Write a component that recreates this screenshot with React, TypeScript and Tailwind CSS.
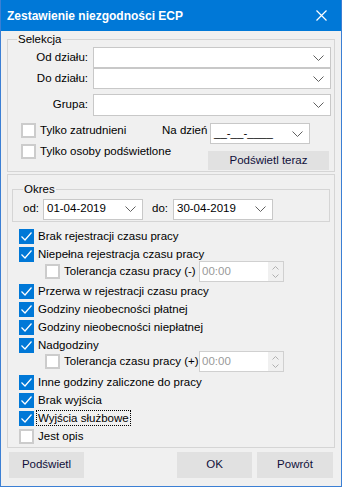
import React from "react";

const font = { fontFamily: '"Liberation Sans", Arial, sans-serif' };

function Chevron({ className = "" }: { className?: string }) {
  return (
    <svg width="11" height="6" viewBox="0 0 11 6" className={className}>
      <path d="M0.5 0.5 L5.5 5.5 L10.5 0.5" fill="none" stroke="#606060" strokeWidth="1" />
    </svg>
  );
}

function Check({ checked }: { checked: boolean }) {
  if (checked) {
    return (
      <div className="w-[15px] h-[15px] bg-[#0078d7] flex items-center justify-center shrink-0">
        <svg width="13" height="13" viewBox="0 0 13 13">
          <path d="M1.5 6.5 L5 10 L11.5 2.5" fill="none" stroke="#ffffff" strokeWidth="1.2" />
        </svg>
      </div>
    );
  }
  return <div className="w-[15px] h-[15px] bg-white border-2 border-[#cccccc] shrink-0" />;
}

function Combo({ className = "", text = "" }: { className?: string; text?: string }) {
  return (
    <div className={`bg-white border border-[#c8c8c8] flex items-center justify-between pl-[3px] pr-[6px] ${className}`}>
      <span className="text-black">{text}</span>
      <Chevron />
    </div>
  );
}

function Row({ checked, label, focus }: { checked: boolean; label: string; focus?: boolean }) {
  return (
    <div className="h-[18px] flex items-start pl-[11px]">
      <Check checked={checked} />
      <span
        className={`ml-[3px] leading-[14px] px-[1px] ${focus ? "outline outline-1 outline-dotted outline-black" : ""}`}
      >
        {label}
      </span>
    </div>
  );
}

function Tolerance({ label, className }: { label: string; className: string }) {
  return (
    <div className={`h-[21px] flex items-center pl-[37px] ${className}`}>
      <Check checked={false} />
      <span className="ml-[4px] w-[135px]">{label}</span>
      <div className="w-[85px] h-[21px] bg-white border border-[#d0d0d0] flex items-center justify-between pl-[2px]">
        <span className="text-[#9a9a9a]">00:00</span>
        <div className="w-[15px] h-[19px] bg-[#f0f0f0] flex flex-col items-center justify-center gap-[4px]">
          <svg width="7" height="4" viewBox="0 0 7 4">
            <path d="M0.5 3.5 L3.5 0.5 L6.5 3.5" fill="none" stroke="#b0b0b0" strokeWidth="1" />
          </svg>
          <svg width="7" height="4" viewBox="0 0 7 4">
            <path d="M0.5 0.5 L3.5 3.5 L6.5 0.5" fill="none" stroke="#b0b0b0" strokeWidth="1" />
          </svg>
        </div>
      </div>
    </div>
  );
}

function Btn({ label, className = "" }: { label: string; className?: string }) {
  return (
    <div className={`h-[26px] bg-[#e1e1e1] flex items-center justify-center text-[#10103a] ${className}`}>
      {label}
    </div>
  );
}

export default function App() {
  return (
    <div
      className="w-[342px] h-[487px] bg-[#f0f0f0] border-x border-b border-[#3b7fd4] flex flex-col text-[11.5px] text-black"
      style={font}
    >
      <div className="h-[31px] bg-[#0078d7] flex items-center justify-between pl-[6px] pr-[14px] shrink-0">
        <span className="text-white font-bold text-[12px]">Zestawienie niezgodności ECP</span>
        <svg width="11" height="11" viewBox="0 0 11 11">
          <path d="M0.5 0.5 L10.5 10.5 M10.5 0.5 L0.5 10.5" stroke="#ffffff" strokeWidth="1.2" />
        </svg>
      </div>

      <div className="flex flex-col pl-[6px] pr-[6px]">
        {/* Selekcja */}
        <div className="relative mt-[8px] h-[133px] border border-[#d5d5d5] flex flex-col">
          <span className="absolute -top-[8px] left-[9px] bg-[#f0f0f0] px-[1px] leading-[14px]">Selekcja</span>
          <div className="flex items-center mt-[7px] h-[21px]">
            <span className="w-[80px] text-right">Od działu:</span>
            <Combo className="ml-[5px] w-[238px] h-[21px]" />
          </div>
          <div className="flex items-center h-[21px]">
            <span className="w-[80px] text-right">Do działu:</span>
            <Combo className="ml-[5px] w-[238px] h-[21px]" />
          </div>
          <div className="flex items-center mt-[5px] h-[22px]">
            <span className="w-[80px] text-right">Grupa:</span>
            <Combo className="ml-[5px] w-[238px] h-[22px]" />
          </div>
          <div className="flex items-start mt-[7px] h-[21px] pl-[13px]">
            <Check checked={false} />
            <span className="ml-[4px] w-[122px] leading-[14px]">Tylko zatrudnieni</span>
            <span className="w-[48px] leading-[14px]">Na dzień</span>
            <Combo className="w-[100px] h-[21px]" text="__-__-____" />
          </div>
          <div className="flex items-start h-[27px] pl-[13px]">
            <Check checked={false} />
            <span className="ml-[4px] w-[168px] leading-[14px]">Tylko osoby podświetlone</span>
            <Btn label="Podświetl teraz" className="mt-[7px] w-[121px] !h-[19px]" />
          </div>
        </div>

        {/* Panel */}
        <div className="mt-[2px] h-[274px] border border-[#d5d5d5] flex flex-col">
          <div className="relative mt-[14px] mx-[4px] h-[35px] border border-[#d5d5d5] flex items-center">
            <span className="absolute -top-[8px] left-[10px] bg-[#f0f0f0] px-[1px] leading-[14px]">Okres</span>
            <div className="flex items-center mt-[7px] pl-[10px]">
              <span className="w-[20px]">od:</span>
              <Combo className="w-[100px] h-[21px]" text="01-04-2019" />
              <span className="ml-[9px] w-[21px]">do:</span>
              <Combo className="w-[100px] h-[21px]" text="30-04-2019" />
            </div>
          </div>
          <div className="flex flex-col mt-[7px]">
            <Row checked label="Brak rejestracji czasu pracy" />
            <Row checked label="Niepełna rejestracja czasu pracy" />
            <Tolerance label="Tolerancja czasu pracy (-)" className="-mt-[4px] mb-[2px]" />
            <Row checked label="Przerwa w rejestracji czasu pracy" />
            <Row checked label="Godziny nieobecności płatnej" />
            <Row checked label="Godziny nieobecności niepłatnej" />
            <Row checked label="Nadgodziny" />
            <Tolerance label="Tolerancja czasu pracy (+)" className="-mt-[5px] mb-[3px]" />
            <Row checked label="Inne godziny zaliczone do pracy" />
            <Row checked label="Brak wyjścia" />
            <Row checked label="Wyjścia służbowe" focus />
            <Row checked={false} label="Jest opis" />
          </div>
        </div>

        <div className="flex mt-[4px] pl-[2px]">
          <Btn label="Podświetl" className="w-[75px]" />
          <Btn label="OK" className="ml-[93px] w-[75px]" />
          <Btn label="Powrót" className="ml-[5px] w-[76px]" />
        </div>
      </div>
    </div>
  );
}
